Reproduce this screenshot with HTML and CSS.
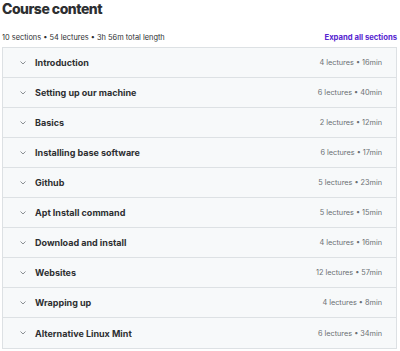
FILE: index.html
```html
<!DOCTYPE html>
<html lang="en">
<head>
    <meta charset="UTF-8">
    <meta name="viewport" content="width=device-width, initial-scale=1.0">
    <title>Course content</title>
    <link rel="stylesheet" href="styles.css">
</head>
<body>
    <div class="curriculum">
        <h2>Course content</h2>

        <div class="summary">
            <span>10 sections • 54 lectures • 3h 56m total length</span>
            <button class="expand-btn">Expand all sections</button>
        </div>

        <div class="sections">
            <div class="section">
                <span class="chevron"><svg viewBox="0 0 6 4" width="6" height="4"><path d="M0.5 0.5l2.5 2.5 2.5-2.5" fill="none" stroke="currentColor" stroke-width="1"/></svg></span>
                <span class="section-title">Introduction</span>
                <span class="section-meta">4 lectures • 16min</span>
            </div>
            <div class="section">
                <span class="chevron"><svg viewBox="0 0 6 4" width="6" height="4"><path d="M0.5 0.5l2.5 2.5 2.5-2.5" fill="none" stroke="currentColor" stroke-width="1"/></svg></span>
                <span class="section-title">Setting up our machine</span>
                <span class="section-meta">6 lectures • 40min</span>
            </div>
            <div class="section">
                <span class="chevron"><svg viewBox="0 0 6 4" width="6" height="4"><path d="M0.5 0.5l2.5 2.5 2.5-2.5" fill="none" stroke="currentColor" stroke-width="1"/></svg></span>
                <span class="section-title">Basics</span>
                <span class="section-meta">2 lectures • 12min</span>
            </div>
            <div class="section">
                <span class="chevron"><svg viewBox="0 0 6 4" width="6" height="4"><path d="M0.5 0.5l2.5 2.5 2.5-2.5" fill="none" stroke="currentColor" stroke-width="1"/></svg></span>
                <span class="section-title">Installing base software</span>
                <span class="section-meta">6 lectures • 17min</span>
            </div>
            <div class="section">
                <span class="chevron"><svg viewBox="0 0 6 4" width="6" height="4"><path d="M0.5 0.5l2.5 2.5 2.5-2.5" fill="none" stroke="currentColor" stroke-width="1"/></svg></span>
                <span class="section-title">Github</span>
                <span class="section-meta">5 lectures • 23min</span>
            </div>
            <div class="section">
                <span class="chevron"><svg viewBox="0 0 6 4" width="6" height="4"><path d="M0.5 0.5l2.5 2.5 2.5-2.5" fill="none" stroke="currentColor" stroke-width="1"/></svg></span>
                <span class="section-title">Apt Install command</span>
                <span class="section-meta">5 lectures • 15min</span>
            </div>
            <div class="section">
                <span class="chevron"><svg viewBox="0 0 6 4" width="6" height="4"><path d="M0.5 0.5l2.5 2.5 2.5-2.5" fill="none" stroke="currentColor" stroke-width="1"/></svg></span>
                <span class="section-title">Download and install</span>
                <span class="section-meta">4 lectures • 16min</span>
            </div>
            <div class="section">
                <span class="chevron"><svg viewBox="0 0 6 4" width="6" height="4"><path d="M0.5 0.5l2.5 2.5 2.5-2.5" fill="none" stroke="currentColor" stroke-width="1"/></svg></span>
                <span class="section-title">Websites</span>
                <span class="section-meta">12 lectures • 57min</span>
            </div>
            <div class="section">
                <span class="chevron"><svg viewBox="0 0 6 4" width="6" height="4"><path d="M0.5 0.5l2.5 2.5 2.5-2.5" fill="none" stroke="currentColor" stroke-width="1"/></svg></span>
                <span class="section-title">Wrapping up</span>
                <span class="section-meta">4 lectures • 8min</span>
            </div>
            <div class="section">
                <span class="chevron"><svg viewBox="0 0 6 4" width="6" height="4"><path d="M0.5 0.5l2.5 2.5 2.5-2.5" fill="none" stroke="currentColor" stroke-width="1"/></svg></span>
                <span class="section-title">Alternative Linux Mint</span>
                <span class="section-meta">6 lectures • 34min</span>
            </div>
        </div>
    </div>
</body>
</html>
```

FILE: styles.css
```css
* {
    margin: 0;
    padding: 0;
    box-sizing: border-box;
}

body {
    font-family: Inter, 'Noto Sans', sans-serif;
    background: #fff;
    color: #2d2f31;
}

.curriculum {
    padding: 0 3px 0 2px;
}

h2 {
    font-size: 14px;
    font-weight: 800;
    line-height: 18px;
    letter-spacing: -0.5px;
    color: #2d2f31;
}

.summary {
    display: flex;
    justify-content: space-between;
    align-items: center;
    margin-top: 10px;
    height: 19px;
    font-size: 7.4px;
    color: #2d2f31;
}

.expand-btn {
    background: none;
    border: none;
    font-family: inherit;
    font-size: 7.7px;
    font-weight: 700;
    color: #5624d0;
    cursor: pointer;
}

.sections {
    border: 1px solid #dde1e4;
}

.section {
    display: flex;
    align-items: center;
    height: 30px;
    padding: 0 14px 0 17px;
    background: #f7f9fa;
    border-bottom: 1px solid #dde1e4;
}

.section:last-child {
    border-bottom: none;
}

.chevron {
    display: flex;
    width: 15px;
    color: #8a8f93;
}

.section-title {
    flex: 1;
    font-size: 9px;
    font-weight: 700;
    color: #2d2f31;
}

.section-meta {
    font-size: 7.3px;
    color: #6a6f73;
}
```
